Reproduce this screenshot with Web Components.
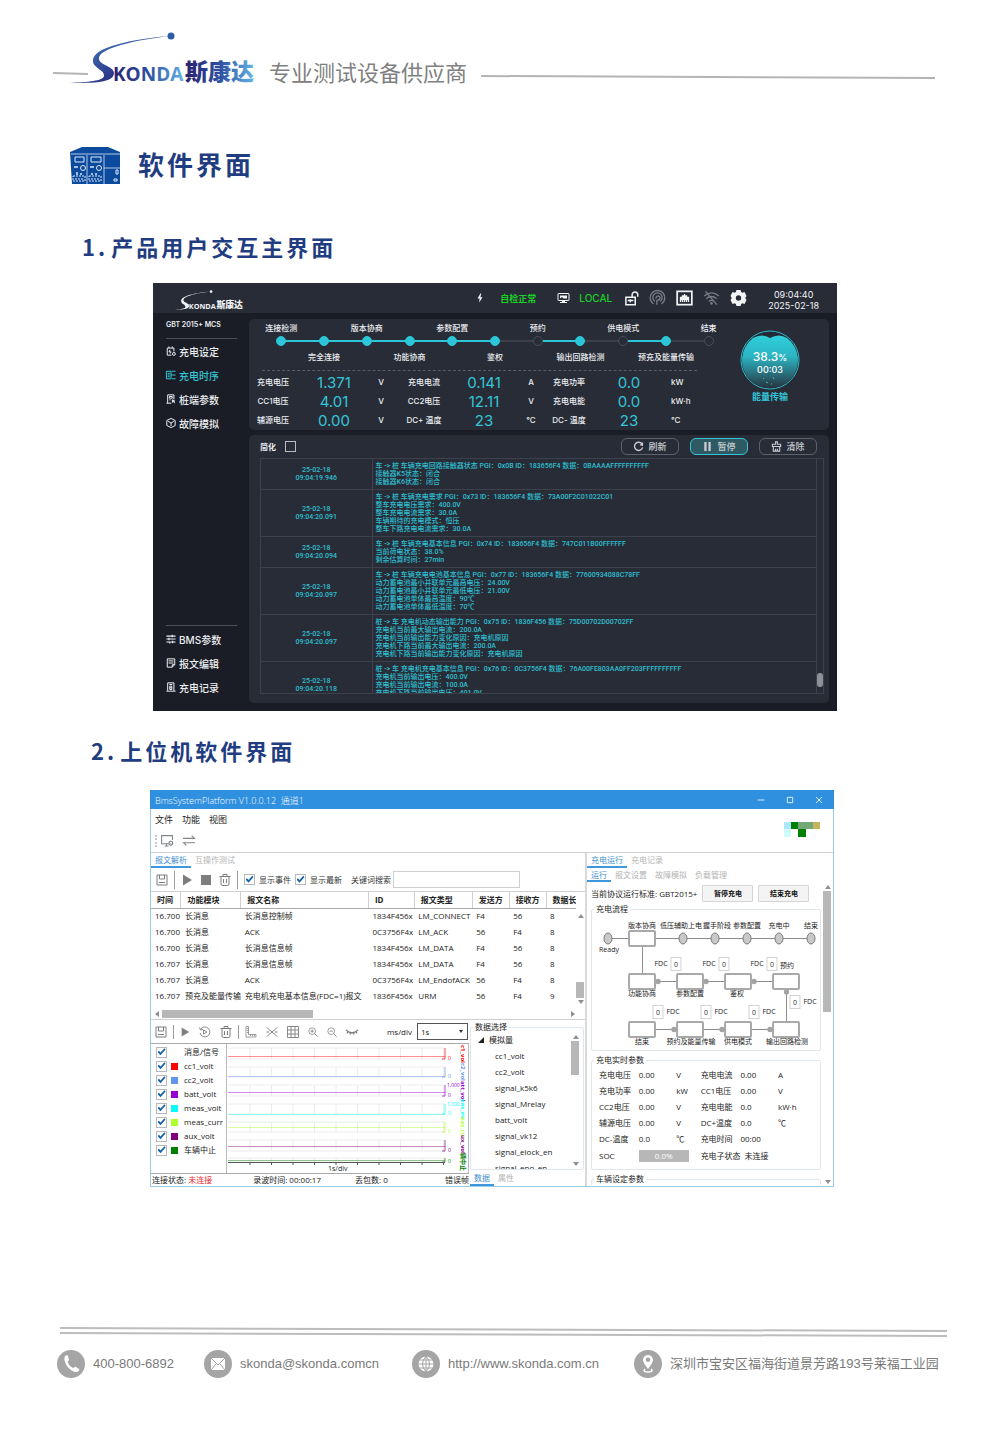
<!DOCTYPE html>
<html lang="zh-CN">
<head>
<meta charset="utf-8">
<meta name="viewport" content="width=device-width, initial-scale=1">
<title>软件界面</title>
<style>
    body {
        margin: 0;
        background: #fff;
        font-family: "Liberation Sans", "Noto Sans CJK SC", sans-serif;
    }
</style>
</head>
<body>
<doc-page>
    <doc-header slot="header">专业测试设备供应商</doc-header>

    <section-title>软件界面</section-title>

    <sub-heading num="1.">产品用户交互主界面</sub-heading>
    <charger-screen></charger-screen>

    <sub-heading num="2." class="second">上位机软件界面</sub-heading>
    <platform-window></platform-window>

    <doc-footer slot="footer"></doc-footer>
</doc-page>

<script>
/**
 * Base class: clones the template of the subclass into an open shadow root
 */
class BaseElement extends HTMLElement {
    constructor() {
        super();
        this._shadowRoot = this.attachShadow({ mode: 'open' });
        this._shadowRoot.appendChild(this.constructor.template.content.cloneNode(true));
    }
}

const createTemplate = (html) => {
    const template = document.createElement('template');
    template.innerHTML = html;
    return template;
};

const define = (name, html) => {
    customElements.define(name, class extends BaseElement {
        static template = createTemplate(html);
    });
};

/* ---------- icons ---------- */

const line = 'fill="none" stroke="currentColor"';
const icons = {
    bolt: '<path d="M13 1 6 13h5l-1 10 8-13h-5l2-9z" fill="currentColor"/>',
    monitor: `<rect x="1" y="3" width="22" height="14" rx="1" ${line} stroke-width="2"/><path d="M5 7h14v6h-7l-3-3-4 3zM9 17h6v3h4v2H5v-2h4z" fill="currentColor"/>`,
    lock: `<path d="M13 10V6a4 4 0 0 1 9 0v3" ${line} stroke-width="2.400"/><path d="M3 10h15v12H3zM6 15h9M10 13v5" ${line} stroke-width="2.400"/>`,
    broadcast: `<path d="M6 21A11 11 0 1 1 18 21M8 17a7 7 0 1 1 8 0M10 13a3 3 0 1 1 3 2l-2 1v6" ${line} stroke-width="2"/>`,
    ethernet: `<rect x="1" y="2" width="22" height="20" ${line} stroke-width="2.600"/><path d="M5 18v-8h3V8h3V6h2v2h3v2h3v8h-2v-3h-1v3h-2v-3h-1v3h-2v-3h-1v3H8v-3H7v3z" fill="currentColor"/>`,
    wifi: `<path d="M1 9c7-6 15-6 22 0M4 13c5-4 11-4 16 0M8 17c3-2 5-2 8 0M3 2l17 20" ${line} stroke-width="2"/><circle cx="12" cy="20" r="2" fill="currentColor"/>`,
    gear: '<path fill-rule="evenodd" fill="currentColor" d="m9 0 6 0 1 3 2 1 3-1 3 6-2 3 2 3-3 6-3-1-2 1-1 3H9l-1-3-2-1-3 1-3-6 2-3-2-3 3-6 3 1 2-1zM12 8a4 4 0 1 0 0 8 4 4 0 0 0 0-8z"/>',
    battery: `<path d="M13 22H3V5h16v8M7 5V1M15 5V1M10 9l-3 5h5l-2 4" ${line} stroke-width="2.400"/><circle cx="19" cy="19" r="3.500" ${line} stroke-width="2.400"/>`,
    sequence: `<path d="M1 3h11v18H1zM4 8h5M4 12h5M4 16h5M12 12h11M14 3h9M14 21h9" ${line} stroke-width="2.400"/>`,
    pile: `<path d="M4 22V2h15v11M8 6h7v4H8zM1 22h12M8 14h3M15 14l6 3-3 1 3 4M15 14l1 6 2-2" ${line} stroke-width="2.400"/>`,
    cube: `<path d="m12 1 10 5v12l-10 5-10-5V6zM5 8l7 4 7-4M12 12v7" ${line} stroke-width="2.400"/>`,
    sliders: `<path d="M1 5h22M1 12h22M1 19h22M15 2v6M7 9v6M16 16v6M9 19v4" ${line} stroke-width="2.600"/>`,
    script: `<path d="M3 2h18v14l-6 6H3zM6 7h12M6 12h12M15 22v-6h6" ${line} stroke-width="2.400"/>`,
    record: `<path d="M4 21V2h15v19M1 22h22M8 6h7M9 10h5v8H9zM9 14h5" ${line} stroke-width="2.400"/>`,
    refresh: `<path d="M20 7a9 9 0 1 0 1 7" ${line} stroke-width="3"/><path d="m22 2 0 9-8-2z" fill="currentColor"/>`,
    pause: '<path d="M5 2h5v20H5zM14 2h5v20h-5z" fill="currentColor"/>',
    broom: `<path d="M10 2h4v5h7v5H3V7h7zM5 12v10h14V12M10 22v-5M14 22v-5" ${line} stroke-width="2.400"/>`,
    pc: `<path d="M15 18H2V3h20v8M8 22h7M11 18v4" ${line} stroke-width="2"/><circle cx="19" cy="17" r="3.500" ${line} stroke-width="2"/><circle cx="19" cy="17" r="1" fill="currentColor"/><path d="M19 12v2M19 20v2M14 17h2M22 17h2" ${line}/>`,
    swap: `<path d="M1 8h21l-5-5M23 16H2l5 5" ${line} stroke-width="2"/>`,
    save: `<path d="M2 2h20v20H2zM7 2v8h10V2M6 17h12" ${line} stroke-width="2"/>`,
    play: '<path d="M4 1v22l18-11z" fill="currentColor"/>',
    stop: '<path d="M2 2h20v20H2z" fill="currentColor"/>',
    trash: `<path d="M1 5h22M4 5v15q0 3 3 3h10q3 0 3-3V5M8 5V1h8v4M9 10v8M15 10v8" ${line} stroke-width="2"/>`,
    replay: `<path d="M3 7a10 10 0 1 1-1 7M1 3l2 5 5-1M9 8v8l7-4z" ${line} stroke-width="1.800"/>`,
    ruler: `<path d="M2 1h5v16h15v5H2zM7 5H4M7 9H4M7 13H4M11 17v3M15 17v3M19 17v3" ${line} stroke-width="1.500"/>`,
    scatter: `<path d="m2 3 8 8M22 3l-8 8M2 21l8-8M22 21l-8-8M1 12h5M18 12h5" ${line} stroke-width="2"/><circle cx="12" cy="12" r="2" fill="currentColor"/>`,
    grid: `<path d="M1 1h22v22H1zM8 1v22M16 1v22M1 8h22M1 16h22" ${line} stroke-width="1.800"/>`,
    zoomin: `<circle cx="10" cy="10" r="8" ${line} stroke-width="1.800"/><path d="m16 16 7 7M6 10h8M10 6v8" ${line} stroke-width="2"/>`,
    zoomout: `<circle cx="10" cy="10" r="8" ${line} stroke-width="1.800"/><path d="m16 16 7 7M6 10h8" ${line} stroke-width="2"/>`,
    eye: `<path d="M0 8q12 11 24 0M4 11l-2 4M9 13l-1 4M15 13l1 4M20 11l2 4" ${line} stroke-width="2.400"/>`,
    minimise: `<path d="M2 12h20" ${line} stroke-width="2.500"/>`,
    maximise: `<path d="M4 4h16v16H4z" ${line} stroke-width="2.500"/>`,
    close: `<path d="m3 3 18 18M21 3 3 21" ${line} stroke-width="2.500"/>`,
    phone: '<path d="M6 4c1-1 3-1 3 0l1 4c0 1-2 1-1 3 1 2 3 4 5 5 1 0 2-2 3-1l3 2c1 1-1 3-2 3C12 21 3 10 6 4z" fill="#fff"/>',
    mail: '<path d="M5 6h14v12H5z" fill="#fff"/><path d="m5 6 7 7 7-7M5 18l5-6M19 18l-5-6" fill="none" stroke="#a5a5a5"/>',
    globe: '<circle cx="12" cy="12" r="7.500" fill="#fff"/><path d="M4 12h16M5 8h14M5 16h14M12 4v16M12 4q-7 8 0 16M12 4q7 8 0 16" fill="none" stroke="#a5a5a5"/>',
    pin: '<path fill-rule="evenodd" d="M12 3a5 5 0 0 1 5 5c0 3-3 6-5 9-2-3-5-6-5-9a5 5 0 0 1 5-5zm0 2.500a2.300 2.300 0 1 0 0 4.600 2.300 2.300 0 0 0 0-4.600z" fill="#fff"/><path d="M9 17q-3 3 3 3t3-3" fill="none" stroke="#fff" stroke-width="1.500"/>',
};

class UiIcon extends HTMLElement {
    connectedCallback() {
        if (this.shadowRoot) {
            return;
        }
        this.attachShadow({ mode: 'open' }).innerHTML = `
            <style>
                :host { display: block; flex: none; width: 12px; height: 12px; }
                svg { display: block; width: 100%; height: 100%; overflow: visible; }
            </style>
            <svg viewBox="0 0 24 24" aria-hidden="true">${icons[this.getAttribute('name')]}</svg>
        `;
    }
}
customElements.define('ui-icon', UiIcon);

/* ---------- document parts ---------- */

define('doc-page', `
    <style>
        :host { display: block; padding: 30px 53px 0; }
        main { padding: 0 17px; }
        ::slotted(section-title) { margin-top: 61px; }
        ::slotted(sub-heading) { margin: 47px 0 22px 12px; }
        ::slotted(sub-heading.second) { margin: 24px 0 25px 21px; }
        ::slotted(charger-screen) { margin: 0 93px 0 83px; }
        ::slotted(platform-window) { margin: 0 96px 0 80px; }
    </style>
    <slot name="header"></slot>
    <main><slot></slot></main>
    <slot name="footer"></slot>
`);

define('brand-logo', `
    <style>
        :host { display: block; flex: none; width: 188px; height: 56px; }
        svg { display: block; width: 100%; height: 100%; overflow: visible; }
        text { font-weight: 700; }
        .latin { font-family: "Open Sans", sans-serif; font-size: 19px; }
        .han { font-family: "Noto Sans CJK SC", sans-serif; font-size: 23px; font-weight: 900; }
        :host([plain]) text, :host([plain]) path, :host([plain]) circle { fill: #f2f3f5; }
    </style>
    <svg viewBox="0 0 188 56" role="img" aria-label="SKONDA">
        <defs>
            <linearGradient id="g"><stop offset="0" stop-color="#2a2170"/><stop offset=".5" stop-color="#2d4fa0"/><stop offset="1" stop-color="#63b5e6"/></linearGradient>
            <linearGradient id="s" y2="1"><stop offset="0" stop-color="#4a8cc8"/><stop offset=".6" stop-color="#2c3c8c"/><stop offset="1" stop-color="#161a50"/></linearGradient>
        </defs>
        <path d="M101 6C64 9 23 17 24 31c0 7 12 9 11 15-1 5-16 6-34 7 23 0 44 0 44-10 0-7-16-8-15-15C31 18 66 10 101 6z" fill="url(#s)"/>
        <circle cx="102" cy="6" r="3.500" fill="#2f5ca8"/>
        <text class="latin" x="44" y="51" fill="url(#g)">KONDA</text>
        <text class="han" x="116" y="50" fill="url(#g)">斯康达</text>
    </svg>
`);

define('doc-header', `
    <style>
        :host { display: flex; align-items: flex-start; height: 56px; margin-right: 12px; }
        svg { display: block; height: 6px; overflow: visible; }
        line { stroke: #b4b4b4; stroke-width: 2; vector-effect: non-scaling-stroke; }
        .left { width: 35px; margin: 41px -19px 0 0; }
        .right { flex: 1; min-width: 0; margin: 44px 0 0 14px; }
        p { margin: 24px 0 0 12px; font: 400 22px/34px "Noto Sans CJK SC", sans-serif; color: #808080; white-space: nowrap; }
    </style>
    <svg class="left" viewBox="0 0 35 6" preserveAspectRatio="none"><line x1="0" y1="2" x2="35" y2="3"/></svg>
    <brand-logo></brand-logo>
    <p><slot></slot></p>
    <svg class="right" viewBox="0 0 100 6" preserveAspectRatio="none"><line x1="0" y1="2" x2="100" y2="4"/></svg>
`);

define('section-title', `
    <style>
        :host { display: flex; align-items: flex-start; gap: 18px; }
        svg { width: 50px; height: 37px; }
        h1 { margin: 0; font: 700 26px/34px "Noto Sans CJK SC", sans-serif; letter-spacing: 3px; color: #1f3d80; }
    </style>
    <svg viewBox="0 0 50 37" aria-hidden="true">
        <path d="M0 5 12 0h26l12 5v32H2z" fill="#0b4a9c"/>
        <g fill="none" stroke="#dbe8f7">
            <path d="M1 7h49M17 8v29M34 8v29M34 21h16" stroke-width=".800"/>
            <path d="M5 10h9v5H5zM21 10h10v5H21zM46 23h2v4h-2zM44 32h3v2h-3z"/>
            <circle cx="13" cy="21" r="2.500"/><circle cx="29" cy="21" r="2.500"/>
            <path d="M4 20h4M20 20h4M7 25v3M11 26v2M22 26v2M26 26v2" stroke-width="1.500"/>
            <path d="M3 29h12v5H3zM19 29h12v5H19zM5 32h8M21 32h8" stroke-dasharray="2 1"/>
        </g>
    </svg>
    <h1><slot></slot></h1>
`);

customElements.define('sub-heading', class extends BaseElement {
    static template = createTemplate(`
        <style>
            :host { display: block; }
            h2 { display: flex; gap: 3px; margin: 0; font: 700 22px/30px "Noto Sans CJK SC", sans-serif; letter-spacing: 3px; color: #1f3d80; }
        </style>
        <h2><span class="num"></span><span><slot></slot></span></h2>
    `);

    connectedCallback() {
        this._shadowRoot.querySelector('.num').textContent = this.getAttribute('num');
    }
});

define('contact-item', `
    <style>
        :host { display: flex; align-items: center; gap: 8px; }
        span { display: grid; place-items: center; flex: none; width: 28px; height: 28px; border-radius: 50%; background: #a5a5a5; }
        ::slotted(*) { color: inherit; text-decoration: none; white-space: nowrap; }
    </style>
    <span><slot name="icon"></slot></span>
    <slot></slot>
`);

define('doc-footer', `
    <style>
        :host { display: block; margin-top: 139px; padding: 0 0 60px 4px; font: 13px/20px "Liberation Sans", "Noto Sans CJK SC", sans-serif; color: #7a7a7a; }
        svg { display: block; width: calc(100% - 3px); height: 12px; margin-left: 3px; overflow: visible; }
        line { stroke: #bdbdbd; stroke-width: 2; vector-effect: non-scaling-stroke; }
        address { display: grid; grid-template-columns: 147fr 208fr 222fr 313fr; margin-top: 12px; font-style: normal; }
        ui-icon { width: 24px; height: 24px; }
    </style>
    <svg viewBox="0 0 100 12" preserveAspectRatio="none">
        <line x1="0" y1="2" x2="100" y2="5"/>
        <line x1="0" y1="7" x2="100" y2="10"/>
    </svg>
    <address>
        <contact-item><ui-icon slot="icon" name="phone"></ui-icon><a href="tel:4008006892">400-800-6892</a></contact-item>
        <contact-item><ui-icon slot="icon" name="mail"></ui-icon><a href="mailto:skonda@skonda.comcn">skonda@skonda.comcn</a></contact-item>
        <contact-item><ui-icon slot="icon" name="globe"></ui-icon><a href="http://www.skonda.com.cn">http://www.skonda.com.cn</a></contact-item>
        <contact-item><ui-icon slot="icon" name="pin"></ui-icon><span>深圳市宝安区福海街道景芳路193号莱福工业园</span></contact-item>
    </address>
`);

/* ---------- charger touch screen ---------- */

define('status-bar', `
    <style>
        :host { display: flex; align-items: center; height: 30px; padding: 0 18px 0 19px; background: #272c37; color: #f2f3f5; }
        brand-logo { width: 72px; height: 22px; margin: 3px auto 0 0; }
        .ok { color: #1bd024; font-size: 9px; font-weight: 700; margin: 0 21px 0 15px; }
        .mode { color: #1bd024; font-size: 10px; font-weight: 500; margin: 0 12px 0 9px; }
        .icons { display: flex; align-items: center; gap: 10px; }
        .icons ui-icon { width: 17px; height: 16px; }
        .icons .lock { width: 15px; height: 15px; }
        .dim { color: #777c85; }
        time { margin-left: 21px; font-size: 9px; line-height: 11px; text-align: center; padding-top: 3px; }
        .bolt { width: 10px; height: 10px; }
        .monitor { width: 13px; height: 12px; }
    </style>
    <brand-logo plain></brand-logo>
    <ui-icon class="bolt" name="bolt"></ui-icon>
    <span class="ok">自检正常</span>
    <ui-icon class="monitor" name="monitor"></ui-icon>
    <span class="mode">LOCAL</span>
    <div class="icons">
        <ui-icon class="lock" name="lock"></ui-icon>
        <ui-icon class="dim" name="broadcast"></ui-icon>
        <ui-icon name="ethernet"></ui-icon>
        <ui-icon class="dim" name="wifi"></ui-icon>
        <ui-icon name="gear"></ui-icon>
    </div>
    <time>09:04:40<br>2025-02-18</time>
`);

define('nav-link', `
    <style>
        :host { display: block; }
        a { display: flex; align-items: center; gap: 3px; height: 24px; color: inherit; text-decoration: none; font-size: 10px; font-weight: 500; white-space: nowrap; }
        :host([active]) a { color: #35c5d8; }
        ::slotted(ui-icon) { width: 10px; height: 10px; }
    </style>
    <a href="#"><slot name="icon"></slot><slot></slot></a>
`);

define('side-nav', `
    <style>
        :host { display: flex; flex-flow: column nowrap; padding: 7px 12px 12px 13px; color: #eceef1; }
        b { font-size: 7px; line-height: 10px; font-weight: 600; white-space: nowrap; }
        hr { width: 100%; margin: 8px 0 0; border: 0; border-top: 1px solid #4c5059; }
        .bottom { margin-top: auto; }
        .bottom hr { margin: 0 0 1px; }
    </style>
    <b>GBT 2015+ MCS</b>
    <hr>
    <nav>
        <nav-link><ui-icon slot="icon" name="battery"></ui-icon>充电设定</nav-link>
        <nav-link active><ui-icon slot="icon" name="sequence"></ui-icon>充电时序</nav-link>
        <nav-link><ui-icon slot="icon" name="pile"></ui-icon>桩端参数</nav-link>
        <nav-link><ui-icon slot="icon" name="cube"></ui-icon>故障模拟</nav-link>
    </nav>
    <nav class="bottom">
        <hr>
        <nav-link><ui-icon slot="icon" name="sliders"></ui-icon>BMS参数</nav-link>
        <nav-link><ui-icon slot="icon" name="script"></ui-icon>报文编辑</nav-link>
        <nav-link><ui-icon slot="icon" name="record"></ui-icon>充电记录</nav-link>
    </nav>
`);

define('charge-step', `
    <style>
        :host { display: grid; grid-template: 14px 14px 16px / minmax(0, 1fr); min-width: 0; font-size: 8px; font-weight: 500; }
        .label { display: flex; grid-row: 3; align-items: center; justify-content: center; white-space: nowrap; }
        :host([up]) .label { grid-row: 1; }
        .rail { grid-row: 2; display: flex; align-items: center; }
        i { flex: 1; height: 2px; background: #3d4048; }
        b { width: 8px; height: 8px; border: 1px solid #4a4e57; border-radius: 50%; }
        :host([done]) b { border-color: #2cc6d8; background: #2cc6d8; }
        :host([in]) i:first-child, :host([out]) i:last-child { background: #2cc6d8; }
        :host(:first-child) i:first-child, :host(:last-child) i:last-child { background: none; }
    </style>
    <span class="label"><slot></slot></span>
    <span class="rail"><i></i><b></b><i></i></span>
`);

define('energy-ball', `
    <style>
        :host { display: flex; flex-flow: column nowrap; align-items: center; color: #35c5d8; font-size: 9px; font-weight: 600; line-height: 14px; }
        svg { display: block; width: 60px; height: 60px; }
        text { fill: #fff; text-anchor: middle; font-weight: 500; }
        .big { font-size: 12px; }
        .unit, .small { font-size: 9px; }
    </style>
    <svg viewBox="0 0 60 60">
        <defs><linearGradient id="w" x2="0" y2="1"><stop offset="0" stop-color="#2fd0dc"/><stop offset=".400" stop-color="#2cb4c2"/><stop offset="1" stop-color="#26343f"/></linearGradient></defs>
        <circle cx="30" cy="30" r="29" fill="#262c36" stroke="#2fb9c9"/>
        <path d="M13 8q9-5 17 0 9-5 17 0a28 28 0 1 1-34 0z" fill="url(#w)"/>
        <path d="m23 48 1 1M33 47l1 2M26 52l2 1M31 54h1" stroke="#58aab4"/>
        <text class="big" x="30" y="31">38.3<tspan class="unit">%</tspan></text>
        <text class="small" x="30" y="43">00:03</text>
    </svg>
    <slot></slot>
`);

customElements.define('reading-grid', class extends BaseElement {
    static template = createTemplate(`
        <style>
            :host { display: block; }
            table { width: 100%; table-layout: fixed; border-collapse: collapse; }
            th, td { height: 19px; padding: 0; text-align: center; font-size: 8px; line-height: 19px; font-weight: 500; white-space: nowrap; }
            .value { color: #35c5d8; font-size: 15px; font-weight: 400; }
            td:last-child { text-align: left; }
        </style>
        <table>
            <colgroup></colgroup>
            <tbody></tbody>
        </table>
    `);

    connectedCallback() {
        const widths = [48, 74, 20, 66, 54, 40, 36, 84, 40];
        const rows = [
            ['充电电压', '1.371', 'V', '充电电流', '0.141', 'A', '充电功率', '0.0', 'kW'],
            ['CC1电压', '4.01', 'V', 'CC2电压', '12.11', 'V', '充电电能', '0.0', 'kW·h'],
            ['辅源电压', '0.00', 'V', 'DC+ 温度', '23', '°C', 'DC- 温度', '23', '°C'],
        ];
        const total = widths.reduce((sum, width) => sum + width, 0);
        this._shadowRoot.querySelector('colgroup').innerHTML = widths
            .map((width) => `<col style="width: ${width * 100 / total}%">`).join('');
        this._shadowRoot.querySelector('tbody').innerHTML = rows.map((row) => `<tr>${
            row.map((text, i) => (i % 3 === 0 ? `<th>${text}</th>` : `<td${i % 3 === 1 ? ' class="value"' : ''}>${text}</td>`)).join('')
        }</tr>`).join('');
    }
});

define('charge-overview', `
    <style>
        :host { display: grid; grid-template-columns: minmax(0, 1fr) 118px; padding: 1px 0 0; border-radius: 5px; background: #272c37; }
        .steps { display: grid; grid-template-columns: repeat(11, minmax(0, 1fr)); margin: 0 -19px 0 11px; }
        hr { margin: 6px 14px 2px 13px; border: 0; border-top: 1px dashed #565b65; }
        energy-ball { padding: 10px 0 0; }
    </style>
    <div>
        <div class="steps">
            <charge-step up done out>连接检测</charge-step>
            <charge-step done in out>完全连接</charge-step>
            <charge-step up done in out>版本协商</charge-step>
            <charge-step done in out>功能协商</charge-step>
            <charge-step up done in out>参数配置</charge-step>
            <charge-step done in>鉴权</charge-step>
            <charge-step up out>预约</charge-step>
            <charge-step done in>输出回路检测</charge-step>
            <charge-step up out>供电模式</charge-step>
            <charge-step done in>预充及能量传输</charge-step>
            <charge-step up>结束</charge-step>
        </div>
        <hr>
        <reading-grid></reading-grid>
    </div>
    <energy-ball>能量传输</energy-ball>
`);

define('pill-button', `
    <style>
        :host { display: block; }
        button { display: flex; align-items: center; justify-content: center; gap: 4px; width: 58px; height: 17px; padding: 0; border: 1px solid #5d6169; border-radius: 6px; background: none; color: #c9ccd1; font: inherit; font-size: 9px; font-weight: 500; line-height: 12px; }
        :host([active]) button { border-color: #35c5d8; background: #2f5963; }
        ::slotted(ui-icon) { width: 11px; height: 11px; }
    </style>
    <button type="button"><slot name="icon"></slot><slot></slot></button>
`);

customElements.define('message-log', class extends BaseElement {
    static template = createTemplate(`
        <style>
            :host { display: flex; height: 234px; overflow: hidden; border: 1px solid #3c414c; color: #2fbfd0; font: 500 7px/8px Roboto, "Noto Sans CJK SC", sans-serif; }
            table { flex: 1; min-width: 0; table-layout: fixed; border-collapse: collapse; align-self: flex-start; }
            col:first-child { width: 111px; }
            td { height: 24px; padding: 3px; border-bottom: 1px solid #3c414c; text-align: left; vertical-align: top; white-space: nowrap; }
            td + td { border-left: 1px solid #3c414c; }
            td:first-child { text-align: center; vertical-align: middle; }
            tr:last-child td { height: 40px; }
            .bar { display: flex; flex-flow: column nowrap; justify-content: flex-end; width: 7px; padding-bottom: 6px; border-left: 1px solid #3c414c; box-sizing: border-box; }
            .bar i { height: 14px; border-radius: 3px; background: #8d9096; }
        </style>
        <table>
            <colgroup><col><col></colgroup>
            <tbody></tbody>
        </table>
        <div class="bar"><i></i></div>
    `);

    connectedCallback() {
        const entries = [
            ['09:04:19.946', '车 -> 桩 车辆充电回路接触器状态 PGI：0x0B ID：183656F4 数据：0BAAAAFFFFFFFFFF', '接触器K5状态：闭合', '接触器K6状态：闭合'],
            ['09:04:20.091', '车 -> 桩 车辆充电需求 PGI：0x73 ID：183656F4 数据：73A00F2C01022C01', '整车充电电压需求：400.0V', '整车充电电流需求：30.0A', '车辆期待的充电模式：恒压', '整车下路充电电流需求：30.0A'],
            ['09:04:20.094', '车 -> 桩 车辆充电基本信息 PGI：0x74 ID：183656F4 数据：747C011B00FFFFFF', '当前荷电状态：38.0%', '剩余估算时间：27min'],
            ['09:04:20.097', '车 -> 桩 车辆充电电池基本信息 PGI：0x77 ID：183656F4 数据：77600934088C78FF', '动力蓄电池最小并联单元最高电压：24.00V', '动力蓄电池最小并联单元最低电压：21.00V', '动力蓄电池单体最高温度：90℃', '动力蓄电池单体最低温度：70℃'],
            ['09:04:20.097', '桩 -> 车 充电机动态输出能力 PGI：0x75 ID：1836F456 数据：75D00702D00702FF', '充电机当前最大输出电流：200.0A', '充电机当前输出能力变化原因：充电机原因', '充电机下路当前最大输出电流：200.0A', '充电机下路当前输出能力变化原因：充电机原因'],
            ['09:04:20.118', '桩 -> 车 充电机充电基本信息 PGI：0x76 ID：0C3756F4 数据：76A00FE803AA0FF203FFFFFFFFFF', '充电机当前输出电压：400.0V', '充电机当前输出电流：100.0A', '充电机下路当前输出电压：401.0V'],
        ];
        this._shadowRoot.querySelector('tbody').innerHTML = entries.map(([time, ...lines]) => `
            <tr><td>25-02-18<br>${time}</td><td>${lines.map((text) => text.replace('>', '&gt;')).join('<br>')}</td></tr>
        `).join('');
    }
});

define('log-panel', `
    <style>
        :host { display: block; padding: 0 5px 9px 11px; border-radius: 5px; background: #272c37; }
        .head { display: flex; align-items: center; gap: 11px; height: 23px; padding-right: 7px; }
        label { display: flex; align-items: center; gap: 9px; margin-right: auto; font-size: 8px; font-weight: 700; }
        input { appearance: none; width: 11px; height: 11px; margin: 0; border: 1px solid #b9bcc2; }
    </style>
    <div class="head">
        <label>简化 <input type="checkbox"></label>
        <pill-button><ui-icon slot="icon" name="refresh"></ui-icon>刷新</pill-button>
        <pill-button active><ui-icon slot="icon" name="pause"></ui-icon>暂停</pill-button>
        <pill-button><ui-icon slot="icon" name="broom"></ui-icon>清除</pill-button>
    </div>
    <message-log></message-log>
`);

define('charger-screen', `
    <style>
        :host { display: block; background: #1a1d25; color: #eceef1; font-family: Inter, "Noto Sans CJK SC", sans-serif; }
        .body { display: grid; grid-template-columns: 96px minmax(0, 1fr); }
        .panels { display: grid; gap: 5px; padding: 6px 8px 8px 0; }
    </style>
    <status-bar></status-bar>
    <div class="body">
        <side-nav></side-nav>
        <div class="panels">
            <charge-overview></charge-overview>
            <log-panel></log-panel>
        </div>
    </div>
`);

/* ---------- desktop platform ---------- */

define('window-title', `
    <style>
        :host { display: flex; align-items: center; height: 19px; padding: 0 5px; background: #2f90df; color: #fff; font-size: 9px; }
        span { white-space: pre; margin: 2px auto 0 0; font-weight: 300; }
        button { display: grid; place-items: center; width: 29px; height: 19px; padding: 0; border: 0; background: none; color: inherit; }
        ui-icon { width: 8px; height: 8px; }
        .buttons { display: flex; margin-right: -4px; }
    </style>
    <span>BmsSystemPlatform V1.0.0.12  通道1</span>
    <div class="buttons">
        <button type="button" aria-label="最小化"><ui-icon name="minimise"></ui-icon></button>
        <button type="button" aria-label="最大化"><ui-icon name="maximise"></ui-icon></button>
        <button type="button" aria-label="关闭"><ui-icon name="close"></ui-icon></button>
    </div>
`);

define('menu-area', `
    <style>
        :host { display: flex; justify-content: space-between; padding: 1px 13px 1px 4px; border-bottom: 1px solid #cfcfcf; }
        nav { display: flex; gap: 9px; height: 20px; font-size: 9px; line-height: 20px; }
        nav a { color: #222; text-decoration: none; }
        .tools { display: flex; align-items: center; gap: 8px; height: 21px; color: #7f858b; }
        .tools i { width: 1px; height: 12px; margin-right: -6px; border-left: 2px dotted #c9c9c9; }
        ui-icon { width: 14px; height: 13px; }
        svg { width: 36px; height: 15px; margin-top: 12px; }
    </style>
    <div>
        <nav><a href="#">文件</a><a href="#">功能</a><a href="#">视图</a></nav>
        <div class="tools"><i></i><ui-icon name="pc"></ui-icon><ui-icon name="swap"></ui-icon></div>
    </div>
    <svg viewBox="0 0 36 15" shape-rendering="crispEdges" aria-hidden="true">
        <path d="M0 0h7v7H0z" fill="#b0e6fb"/><path d="M7 0h7v7H7zM14 7h8v8h-8z" fill="#008000"/>
        <path d="M14 0h15v7H14z" fill="#73a877"/><path d="M29 0h7v7h-7z" fill="#c4b45a"/><path d="M0 7h7v8H0z" fill="#cffbfb"/>
    </svg>
`);

customElements.define('tab-strip', class extends BaseElement {
    static template = createTemplate(`
        <style>
            :host { display: flex; height: 15px; }
            a { padding: 0 4px; border-bottom: 2px solid transparent; color: #b4b4b4; font-size: 8px; line-height: 13px; text-decoration: none; white-space: nowrap; }
            a:first-of-type { border-color: #3f97dd; color: #3f8fcd; }
        </style>
    `);

    connectedCallback() {
        this.getAttribute('tabs').split(',').forEach((name) => {
            const link = document.createElement('a');
            link.href = '#';
            link.textContent = name;
            this._shadowRoot.appendChild(link);
        });
    }
});

define('check-box', `
    <style>
        :host { display: block; }
        label { display: flex; align-items: center; gap: 4px; white-space: nowrap; }
        input { appearance: none; display: grid; place-items: center; flex: none; width: 11px; height: 11px; margin: 0; border: 1px solid #b5b9bd; background: #fff; }
        input:checked::before { content: ""; width: 8px; height: 8px; background: #1463a8; clip-path: polygon(0 50%, 18% 34%, 38% 56%, 86% 4%, 100% 20%, 38% 92%); }
    </style>
    <label><input type="checkbox" checked><slot></slot></label>
`);

define('scroll-bar', `
    <style>
        :host { display: flex; flex-flow: column nowrap; align-items: center; gap: 2px; width: 9px; }
        i { flex: none; width: 0; border: 3px solid transparent; border-top: 0; border-bottom: 4px solid #8f8f8f; }
        i:last-child { border-top: 4px solid #8f8f8f; border-bottom: 0; }
        .track { flex: 1; width: 100%; padding-top: var(--offset, 0); box-sizing: border-box; }
        b { display: block; width: 8px; height: var(--thumb, 16px); background: #b7b7b7; }
    </style>
    <i></i><div class="track"><b></b></div><i></i>
`);

customElements.define('message-table', class extends BaseElement {
    static template = createTemplate(`
        <style>
            :host { display: block; border-bottom: 1px solid #cfcfcf; }
            .wrap { display: flex; }
            .clip { flex: 1; min-width: 0; overflow: hidden; }
            table { width: 100%; table-layout: fixed; border-collapse: collapse; font-size: 8px; }
            th, td { height: 16px; padding: 0 0 0 4px; line-height: 14px; text-align: left; white-space: nowrap; box-sizing: border-box; }
            th { padding-left: 6px; border-bottom: 1px solid #a9a9a9; overflow: hidden; }
            th + th { border-left: 1px solid #cfcfcf; }
            td + td { padding-left: 4px; }
            scroll-bar { margin: 22px 0 0; --offset: 62px; --thumb: 16px; }
            .hbar { display: flex; align-items: center; height: 9px; margin: 5px 10px 1px 4px; }
            .hbar i { border: 3px solid transparent; border-left: 0; border-right: 4px solid #8f8f8f; }
            .hbar i:last-child { margin-left: auto; border-left: 4px solid #8f8f8f; border-right: 0; }
            .hbar b { width: 36%; height: 8px; margin-left: 3px; background: #b7b7b7; }
        </style>
        <div class="wrap">
            <div class="clip"><table><colgroup></colgroup><thead></thead><tbody></tbody></table></div>
            <scroll-bar></scroll-bar>
        </div>
        <div class="hbar"><i></i><b></b><i></i></div>
    `);

    connectedCallback() {
        const root = this._shadowRoot;
        const widths = [30, 60, 128, 46, 58, 37, 37, 30];
        const head = ['时间', '功能模块', '报文名称', 'ID', '报文类型', '发送方', '接收方', '数据长'];
        const rows = [
            ['16.700', '长消息', '长消息控制帧', '1834F456x', 'LM_CONNECT', 'F4', '56', '8'],
            ['16.700', '长消息', 'ACK', '0C3756F4x', 'LM_ACK', '56', 'F4', '8'],
            ['16.700', '长消息', '长消息信息帧', '1834F456x', 'LM_DATA', 'F4', '56', '8'],
            ['16.707', '长消息', '长消息信息帧', '1834F456x', 'LM_DATA', 'F4', '56', '8'],
            ['16.707', '长消息', 'ACK', '0C3756F4x', 'LM_EndofACK', '56', 'F4', '8'],
            ['16.707', '预充及能量传输', '充电机充电基本信息(FDC=1)报文', '1836F456x', 'URM', '56', 'F4', '9'],
        ];
        root.querySelector('colgroup').innerHTML = widths.map((width) => `<col style="width: ${width * 100 / 426}%">`).join('');
        root.querySelector('thead').innerHTML = `<tr>${head.map((text) => `<th>${text}</th>`).join('')}</tr>`;
        root.querySelector('tbody').innerHTML = rows
            .map((row) => `<tr>${row.map((text) => `<td>${text}</td>`).join('')}</tr>`).join('');
    }
});

define('message-toolbar', `
    <style>
        :host { display: flex; align-items: center; height: 23px; padding-left: 5px; border-bottom: 1px solid #cfcfcf; color: #7d7d7d; font-size: 8px; }
        .sep { width: 1px; height: 18px; margin: 0 6px; background: #9c9c9c; }
        button { display: block; padding: 0; border: 0; background: none; color: inherit; }
        .icons { display: flex; gap: 7px; }
        ui-icon { width: 12px; height: 12px; }
        check-box, label { color: #333; }
        check-box { margin-right: 4px; }
        label { display: flex; align-items: center; gap: 2px; margin-left: 5px; white-space: nowrap; }
        input { width: 127px; height: 17px; padding: 0 2px; border: 1px solid #cfcfcf; box-sizing: border-box; font: inherit; }
    </style>
    <button type="button" aria-label="保存"><ui-icon name="save"></ui-icon></button>
    <span class="sep"></span>
    <div class="icons">
        <button type="button" aria-label="开始"><ui-icon name="play"></ui-icon></button>
        <button type="button" aria-label="停止"><ui-icon name="stop"></ui-icon></button>
        <button type="button" aria-label="删除"><ui-icon name="trash"></ui-icon></button>
    </div>
    <span class="sep"></span>
    <check-box>显示事件</check-box>
    <check-box>显示最新</check-box>
    <label>关键词搜索 <input type="text"></label>
`);

define('scope-toolbar', `
    <style>
        :host { display: flex; align-items: center; height: 23px; padding: 0 1px 0 4px; color: #7d7d7d; font-size: 8px; }
        .sep { width: 1px; height: 14px; margin: 0 -3px; background: #9c9c9c; }
        .icons { display: flex; flex: 1; align-items: center; justify-content: space-between; margin-right: 29px; }
        button { display: block; padding: 0; border: 0; background: none; color: inherit; }
        ui-icon { width: 12px; height: 12px; }
        .small ui-icon { width: 10px; height: 10px; }
        label { display: flex; align-items: center; gap: 5px; color: #222; }
        select { appearance: none; width: 51px; height: 17px; padding: 0 3px; border: 1px solid #555; border-radius: 0; background: #fff; color: #222; font: inherit; }
        .pick { display: grid; align-items: center; }
        .pick > * { grid-area: 1 / 1; }
        .pick i { justify-self: end; margin-right: 5px; border: 2px solid transparent; border-top: 3px solid #333; border-bottom: 0; }
    </style>
    <div class="icons">
        <button type="button" aria-label="保存"><ui-icon name="save"></ui-icon></button>
        <span class="sep"></span>
        <button type="button" class="small" aria-label="开始"><ui-icon name="play"></ui-icon></button>
        <button type="button" aria-label="回放"><ui-icon name="replay"></ui-icon></button>
        <button type="button" aria-label="删除"><ui-icon name="trash"></ui-icon></button>
        <span class="sep"></span>
        <button type="button" aria-label="标尺"><ui-icon name="ruler"></ui-icon></button>
        <button type="button" aria-label="游标"><ui-icon name="scatter"></ui-icon></button>
        <button type="button" aria-label="网格"><ui-icon name="grid"></ui-icon></button>
        <button type="button" class="small" aria-label="放大"><ui-icon name="zoomin"></ui-icon></button>
        <button type="button" class="small" aria-label="缩小"><ui-icon name="zoomout"></ui-icon></button>
        <button type="button" aria-label="隐藏"><ui-icon name="eye"></ui-icon></button>
    </div>
    <label>ms/div <span class="pick"><select><option>1s</option></select><i></i></span></label>
`);

customElements.define('scope-plot', class extends BaseElement {
    static template = createTemplate(`
        <style>
            :host { display: grid; grid-template-columns: 76px minmax(0, 1fr); border-top: 1px solid #a9a9a9; border-bottom: 1px solid #a9a9a9; }
            ul { margin: 0; padding: 1px 0 0 5px; border-right: 1px solid #b9b9b9; list-style: none; font-size: 8px; }
            li { height: 14px; line-height: 14px; }
            .swatch { display: block; width: 7px; height: 7px; margin-right: 2px; background: var(--swatch, transparent); }
            svg { display: block; width: 100%; height: 129px; border-right: 1px solid #b9b9b9; box-sizing: border-box; }
            text { font-size: 5px; }
            .name { font-size: 6px; font-weight: 700; }
            .scale { font-size: 7px; }
        </style>
        <ul></ul>
        <svg viewBox="0 0 241 129" preserveAspectRatio="xMinYMin meet"></svg>
    `);

    connectedCallback() {
        const signals = [
            { name: 'cc1_volt', short: 'c1_vol', color: '#ff0000', top: 4, bottom: 15, y: 12 },
            { name: 'cc2_volt', short: 'c2_vol', color: '#6495ed', top: 23, bottom: 33, y: 32 },
            { name: 'batt_volt', short: 'att_vol', color: '#9400d3', top: 41, bottom: 52, y: 48, max: '1,000' },
            { name: 'meas_volt', short: 'eas_vo', color: '#00ffff', top: 60, bottom: 70, y: 70, max: '1,000' },
            { name: 'meas_curr', short: 'eas_cu', color: '#adff2f', top: 78, bottom: 88, y: 83 },
            { name: 'aux_volt', short: 'ux_vol', color: '#800080', top: 96, bottom: 107, y: 102 },
            { name: '车辆中止', short: '辆中止', color: '#008000', top: 114, bottom: 118, y: 116 },
        ];
        this._shadowRoot.querySelector('ul').innerHTML = [{ name: '消息/信号', color: 'transparent' }, ...signals]
            .map(({ name, color }) => `<li><check-box><i class="swatch" style="--swatch: ${color}"></i>${name}</check-box></li>`).join('');

        const columns = Array.from({ length: 10 }, (_, i) => 23 + i * 21.5);
        let svg = '';
        signals.forEach(({ short, color, top, bottom, y, max }, i) => {
            svg += `<path d="M1 ${top}H218M1 ${bottom}H218${columns.map((x) => `M${x} ${top}V${bottom}`).join('')}" stroke="#ececec" fill="none"/>`;
            svg += `<path d="M1 ${y}.500H218" stroke="${color}" stroke-opacity=".450"/>`;
            svg += `<path d="M218 ${top}V${bottom}M215 ${bottom}h3" stroke="${color}" stroke-opacity=".700" fill="none"/>`;
            svg += `<text x="221" y="${bottom + 1}" fill="${color}">0</text>`;
            if (max) {
                svg += `<text x="220" y="${top + 2}" fill="${color}">${max}</text>`;
            }
            svg += `<text class="name" transform="translate(234 ${1 + i * 18}) rotate(90)" fill="${color}">${short}</text>`;
        });
        svg += `<path d="M1 118.500H218${columns.map((x) => `M${x} 118v3`).join('')}" stroke="#555" fill="none"/>`;
        svg += '<text class="scale" x="101" y="127" fill="#222">1s/div</text>';
        this._shadowRoot.querySelector('svg').innerHTML = svg;
    }
});

define('scope-status', `
    <style>
        :host { display: flex; height: 12px; padding: 0 0 0 1px; font-size: 8px; line-height: 12px; white-space: nowrap; }
        b { color: #e8262b; font-weight: 400; }
        .time { margin: 0 34px 0 41px; }
        .errors { margin-left: auto; }
    </style>
    <span>连接状态: <b>未连接</b></span>
    <span class="time">录波时间: 00:00:17</span>
    <span>丢包数: 0</span>
    <span class="errors">错误帧</span>
`);

define('group-box', `
    <style>
        :host { display: block; }
        fieldset { min-width: 0; margin: 0; padding: 0; border: 1px solid #dfe7ec; border-radius: 2px; }
        legend { margin-left: 2px; padding: 0 2px; font-size: 8px; line-height: 10px; }
    </style>
    <fieldset><legend><slot name="legend"></slot></legend><slot></slot></fieldset>
`);

define('signal-tree', `
    <style>
        :host { display: block; padding: 2px 1px 0; font-size: 8px; }
        .body { display: flex; height: 137px; overflow: hidden; }
        ul { flex: 1; margin: 0; padding: 0 0 0 7px; list-style: none; }
        ul ul { padding-left: 17px; }
        li { line-height: 16px; }
        li i { display: inline-block; margin-right: 5px; border: solid transparent; border-width: 0 0 6px 6px; border-bottom-color: #222; }
        scroll-bar { margin: 3px 3px 3px 0; --thumb: 34px; }
        tab-strip { margin-top: 1px; }
    </style>
    <group-box>
        <span slot="legend">数据选择</span>
        <div class="body">
            <ul>
                <li><i></i>模拟量
                    <ul>
                        <li>cc1_volt</li>
                        <li>cc2_volt</li>
                        <li>signal_k5k6</li>
                        <li>signal_Mrelay</li>
                        <li>batt_volt</li>
                        <li>signal_vk12</li>
                        <li>signal_elock_en</li>
                        <li>signal_epo_en</li>
                    </ul>
                </li>
            </ul>
            <scroll-bar></scroll-bar>
        </div>
    </group-box>
    <tab-strip tabs="数据,属性"></tab-strip>
`);

/**
 * Charging flow: the nodes and wires are drawn as SVG,
 * labels and FDC counters are placed over them
 */
customElements.define('flow-diagram', class extends BaseElement {
    static template = createTemplate(`
        <style>
            :host { display: block; position: relative; height: 136px; font-size: 7px; line-height: 10px; }
            svg { display: block; width: 228px; height: 136px; }
            .wire { stroke: #8c8c8c; stroke-width: 1; fill: none; }
            .node { fill: #fff; stroke: #a9a9a9; stroke-width: 2; }
            .dot { fill: #c9c9c9; stroke: #777; }
            .port { fill: #a3a3a3; }
            span, label { position: absolute; transform: translate(-50%, -50%); white-space: nowrap; }
            label { display: flex; align-items: center; gap: 3px; }
            label.flip { flex-direction: row-reverse; }
            input { width: 11px; height: 14px; padding: 0; border: 1px solid #d2d2d2; box-sizing: border-box; background: #fff; color: #333; font: inherit; text-align: center; }
        </style>
        <svg viewBox="0 0 228 136"></svg>
    `);

    connectedCallback() {
        const dots = [16, 91, 123, 155, 187, 219];
        const top = [37, 85, 133, 181];
        const labels = [
            ['版本协商', 50, 12], ['低压辅助上电', 89, 12], ['握手阶段', 125, 12], ['参数配置', 155, 12], ['充电中', 187, 12], ['结束', 219, 12],
            ['Ready', 17, 36], ['预约', 195, 52],
            ['功能协商', 50, 80], ['参数配置', 98, 80], ['鉴权', 145, 80],
            ['结束', 50, 128], ['预约及能量传输', 99, 128], ['供电模式', 146, 128], ['输出回路检测', 195, 128],
        ];
        const counters = [[76, 50], [124, 50], [172, 50], [211, 88, 1], [74, 98, 1], [122, 98, 1], [170, 98, 1]];

        this._shadowRoot.querySelector('svg').innerHTML = `
            <path class="wire" d="M16 24.500H219M50.500 24v43M50 67.500H194M50 115.500H194M194.500 67v48"/>
            ${[67, 115].map((y) => top.map((x) => `<rect class="node" x="${x}" y="${y - 7}" width="26" height="15" rx="1"/>`).join('')).join('')}
            <rect class="node" x="37" y="17" width="26" height="15" rx="1"/>
            ${dots.map((x) => `<ellipse class="dot" cx="${x}" cy="24.500" rx="4" ry="5.500"/>`).join('')}
            ${[66, 114, 162].map((x) => `<circle class="port" cx="${x}" cy="67.500" r="2.700"/><circle class="port" cx="${x + 16}" cy="115.500" r="2.700"/>`).join('')}
            <circle class="port" cx="194.500" cy="78" r="2.700"/>
        `;
        this._shadowRoot.innerHTML += labels
            .map(([text, x, y]) => `<span style="left: ${x}px; top: ${y}px">${text}</span>`).join('')
            + counters.map(([x, y, flip]) => `<label${flip ? ' class="flip"' : ''} style="left: ${x}px; top: ${y}px">FDC <input type="text" value="0"></label>`).join('');
    }
});

define('param-table', `
    <style>
        :host { display: block; padding: 2px 0 4px 7px; font-size: 8px; }
        table { width: 100%; table-layout: fixed; border-collapse: collapse; }
        th, td { height: 16px; padding: 0; line-height: 14px; text-align: left; font-weight: 400; white-space: nowrap; }
        tr:last-child > * { height: 18px; }
        .soc { width: 50px; height: 12px; background: #b7b7b7; color: #fff; line-height: 12px; text-align: center; }
    </style>
    <table>
        <colgroup><col style="width: 18%"><col style="width: 17%"><col style="width: 11%"><col style="width: 18%"><col style="width: 17%"><col></colgroup>
        <tr><th>充电电压</th><td>0.00</td><td>V</td><th>充电电流</th><td>0.00</td><td>A</td></tr>
        <tr><th>充电功率</th><td>0.00</td><td>kW</td><th>CC1电压</th><td>0.00</td><td>V</td></tr>
        <tr><th>CC2电压</th><td>0.00</td><td>V</td><th>充电电能</th><td>0.0</td><td>kW·h</td></tr>
        <tr><th>辅源电压</th><td>0.00</td><td>V</td><th>DC+温度</th><td>0.0</td><td>℃</td></tr>
        <tr><th>DC-温度</th><td>0.0</td><td>℃</td><th>充电时间</th><td>00:00</td><td></td></tr>
        <tr><th>SOC</th><td colspan="2"><div class="soc">0.0%</div></td><th>充电子状态</th><td colspan="2">&nbsp; 未连接</td></tr>
    </table>
`);

define('run-panel', `
    <style>
        :host { display: block; min-width: 0; overflow: hidden; }
        .scroll { display: flex; height: 303px; }
        .content { flex: 1; min-width: 0; padding-left: 4px; overflow: hidden; }
        .head { display: flex; align-items: center; gap: 5px; height: 22px; font-size: 8px; white-space: nowrap; }
        button { width: 51px; height: 17px; padding: 0; border: 1px solid #d5d5d5; border-radius: 1px; background: #f4f4f4; color: #111; font: inherit; font-size: 7px; font-weight: 700; }
        tab-strip + tab-strip { height: 14px; }
        scroll-bar { margin: 3px 1px 1px 2px; --thumb: 121px; }
        group-box { margin-bottom: 4px; }
        .empty { height: 40px; }
    </style>
    <tab-strip tabs="充电运行,充电记录"></tab-strip>
    <tab-strip tabs="运行,报文设置,故障模拟,负载管理"></tab-strip>
    <div class="scroll">
        <div class="content">
            <div class="head">
                <span>当前协议运行标准: GBT2015+</span>
                <button type="button">暂停充电</button>
                <button type="button">结束充电</button>
            </div>
            <group-box><span slot="legend">充电流程</span><flow-diagram></flow-diagram></group-box>
            <group-box><span slot="legend">充电实时参数</span><param-table></param-table></group-box>
            <group-box><span slot="legend">车辆设定参数</span><div class="empty"></div></group-box>
        </div>
        <scroll-bar></scroll-bar>
    </div>
`);

define('platform-window', `
    <style>
        :host { display: block; border: 1px solid #9ccbe6; border-top: 0; background: #fff; color: #222; font-family: "Open Sans", "Noto Sans CJK SC", sans-serif; }
        window-title { margin: 0 -1px; }
        .body { display: grid; grid-template-columns: minmax(0, 434fr) minmax(0, 248fr); }
        run-panel { border-left: 2px solid #d9d9d9; }
        .lower { display: grid; grid-template-columns: minmax(0, 318fr) minmax(0, 116fr); }
    </style>
    <window-title></window-title>
    <menu-area></menu-area>
    <div class="body">
        <div>
            <tab-strip tabs="报文解析,互操作测试"></tab-strip>
            <message-toolbar></message-toolbar>
            <message-table></message-table>
            <div class="lower">
                <div>
                    <scope-toolbar></scope-toolbar>
                    <scope-plot></scope-plot>
                    <scope-status></scope-status>
                </div>
                <signal-tree></signal-tree>
            </div>
        </div>
        <run-panel></run-panel>
    </div>
`);
</script>
</body>
</html>
